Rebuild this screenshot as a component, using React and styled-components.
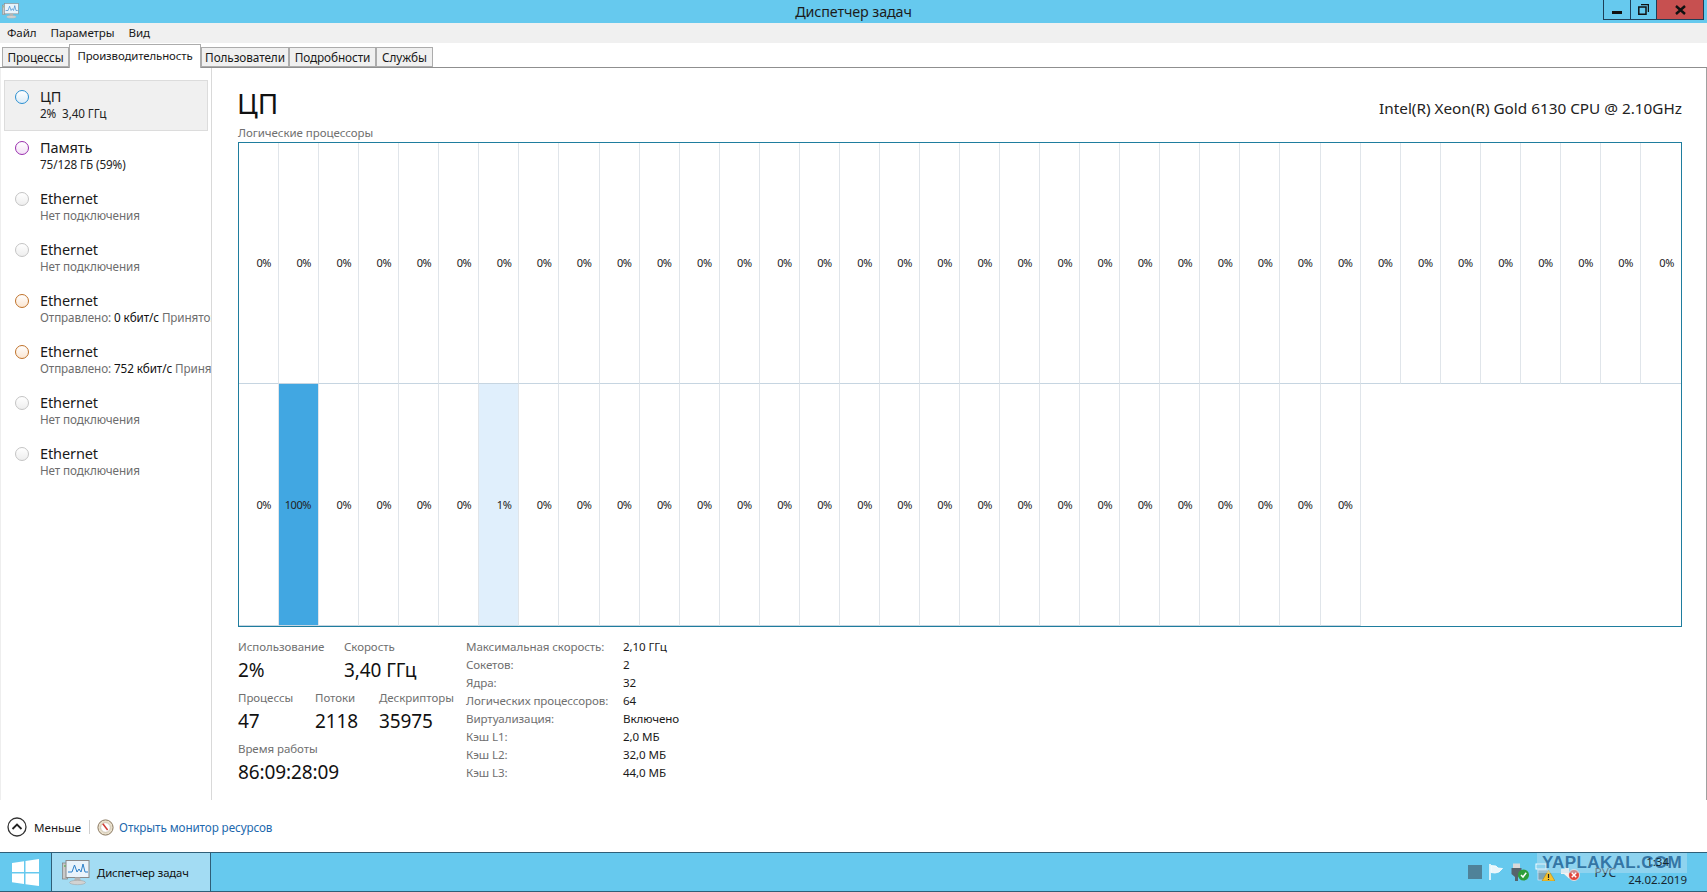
import React from "react";
import styled, { createGlobalStyle } from "styled-components";

const GlobalStyle = createGlobalStyle`
  html, body {
    margin: 0;
    padding: 0;
    height: 100%;
    overflow: hidden;
    background: #fff;
  }
  body {
    font-family: "Noto Sans", "Open Sans", sans-serif;
    color: #111;
  }
`;

const Window = styled.div`
  height: 892px;
  display: flex;
  flex-direction: column;
  position: relative;
`;

const TitleBar = styled.div`
  height: 23px;
  flex: none;
  background: #66c9ee;
  display: grid;
  grid-template-columns: 1fr auto 1fr;
  align-items: start;
`;

const TitleIcon = styled.div`
  padding: 2px 0 0 2px;
  height: 18px;
`;

const TitleText = styled.div`
  font-size: 14.3px;
  line-height: 23px;
  color: #1c1c1c;
  letter-spacing: -0.1px;
`;

const Controls = styled.div`
  justify-self: end;
  display: flex;
  padding-right: 3px;
  height: 20px;
`;

const ControlButton = styled.div`
  width: ${(p) => p.$w}px;
  height: 20px;
  box-sizing: border-box;
  display: flex;
  align-items: center;
  justify-content: center;
  border: 1px solid #1d3f58;
  border-top: none;
  border-left-width: ${(p) => (p.$first ? 1 : 0)}px;
  background: ${(p) => p.$bg || "transparent"};
`;

const MenuBar = styled.div`
  height: 20px;
  flex: none;
  box-sizing: border-box;
  padding: 0 0 2px 7px;
  background: #f0f0f0;
  display: flex;
  align-items: center;
  gap: 14px;
  font-size: 11.6px;
  letter-spacing: -0.1px;
  color: #1a1a1a;
`;

const TabStrip = styled.div`
  height: 25px;
  flex: none;
  box-sizing: border-box;
  display: flex;
  align-items: flex-end;
  padding-left: 2px;
  border-bottom: 1px solid #8f8f8f;
  background: #fff;
`;

const Tab = styled.div`
  width: ${(p) => p.$w}px;
  box-sizing: border-box;
  height: ${(p) => (p.$active ? 24 : 20)}px;
  margin-bottom: ${(p) => (p.$active ? -1 : 0)}px;
  padding-bottom: ${(p) => (p.$active ? 3 : 0)}px;
  display: flex;
  align-items: center;
  justify-content: center;
  background: ${(p) => (p.$active ? "#fff" : "#f0f0f0")};
  border: 1px solid #acacac;
  border-bottom: ${(p) => (p.$active ? "none" : "1px solid #acacac")};
  font-size: ${(p) => (p.$active ? 11.4 : 11.8)}px;
  letter-spacing: -0.1px;
  color: #1a1a1a;
`;

const Body = styled.div`
  flex: 1;
  display: flex;
  min-height: 0;
  border-right: 1px solid #a0a0a0;
`;

const Sidebar = styled.div`
  width: 212px;
  flex: none;
  box-sizing: border-box;
  border-right: 1px solid #d9d9d9;
  border-left: 1px solid #eeeeee;
  padding: 12px 0 0 3px;
  overflow: hidden;
`;

const SideItem = styled.div`
  width: 204px;
  height: 51px;
  box-sizing: border-box;
  display: flex;
  align-items: flex-start;
  padding: 6px 0 0 10px;
  gap: 11px;
  background: ${(p) => (p.$active ? "#f0f0f0" : "transparent")};
  border: 1px solid ${(p) => (p.$active ? "#dcdcdc" : "transparent")};
  white-space: nowrap;
`;

const Ring = styled.div`
  width: 14px;
  height: 14px;
  flex: none;
  margin-top: 3px;
  box-sizing: border-box;
  border-radius: 50%;
  border: 1.5px solid ${(p) => p.$color};
  background: linear-gradient(#ffffff, ${(p) => p.$tint});
`;

const SideTitle = styled.div`
  font-size: 14.5px;
  line-height: 18px;
  color: #1a1a1a;
  letter-spacing: -0.1px;
`;

const SideSub = styled.div`
  font-size: 11.7px;
  line-height: 16px;
  color: ${(p) => (p.$dark ? "#222" : "#6d6d6d")};
  letter-spacing: -0.1px;
  & b {
    font-weight: 400;
    color: #111;
  }
`;

const Main = styled.div`
  flex: 1;
  min-width: 0;
  padding: 16px 24px 0 26px;
`;

const Header = styled.div`
  display: flex;
  justify-content: space-between;
  align-items: flex-end;
  height: 40px;
`;

const Heading = styled.div`
  font-size: 28px;
  line-height: 39px;
  padding-bottom: 1px;
  margin-left: -1px;
  color: #111;
`;

const CpuName = styled.div`
  font-size: 15.3px;
  line-height: 20px;
  padding-bottom: 6px;
  color: #222;
`;

const ChartLabel = styled.div`
  font-size: 11.5px;
  line-height: 16px;
  padding-top: 1px;
  height: 15px;
  color: #707070;
  letter-spacing: -0.05px;
`;

const Chart = styled.div`
  margin-top: 2px;
  height: 485px;
  box-sizing: border-box;
  border: 1px solid #1f7d9e;
  display: grid;
  grid-template-columns: repeat(36, 1fr);
  grid-template-rows: 241px 1fr;
`;

const Cell = styled.div`
  box-sizing: border-box;
  display: flex;
  align-items: center;
  justify-content: flex-end;
  padding: 0 7px 1px 0;
  font-size: 11px;
  letter-spacing: -0.4px;
  color: #222;
  background: ${(p) => p.$fill || "transparent"};
  border-right: ${(p) => (p.$last ? "none" : "1px solid #e0e5ea")};
  border-bottom: 1px solid #c6d5e1;
`;

const Details = styled.div`
  display: flex;
  margin-top: 11px;
`;

const StatsColumn = styled.div`
  width: 228px;
  flex: none;
`;

const StatRow = styled.div`
  display: flex;
  height: 51px;
`;

const Stat = styled.div`
  width: ${(p) => p.$w}px;
  flex: none;
  white-space: nowrap;
`;

const StatLabel = styled.div`
  font-size: 11.5px;
  line-height: 18px;
  color: #707070;
  letter-spacing: -0.05px;
`;

const StatValue = styled.div`
  font-size: 19px;
  line-height: 29px;
  color: #111;
  letter-spacing: -0.1px;
`;

const InfoTable = styled.div`
  display: grid;
  grid-template-columns: 157px auto;
  grid-auto-rows: 18px;
  justify-content: start;
  align-items: center;
  align-self: flex-start;
  margin-top: -1px;
  font-size: 11.6px;
  letter-spacing: -0.1px;
`;

const InfoKey = styled.div`
  color: #707070;
  white-space: nowrap;
`;

const InfoValue = styled.div`
  color: #1a1a1a;
`;

const Footer = styled.div`
  height: 52px;
  flex: none;
  display: flex;
  align-items: center;
  padding: 2px 0 0 7px;
  box-sizing: border-box;
`;

const Less = styled.div`
  display: flex;
  align-items: center;
  gap: 7px;
  font-size: 11.6px;
  color: #1a1a1a;
`;

const FooterDivider = styled.div`
  width: 1px;
  height: 14px;
  background: #cfcfcf;
  margin: 0 7px 0 8px;
`;

const Link = styled.a`
  display: flex;
  align-items: center;
  gap: 5px;
  font-size: 11.7px;
  letter-spacing: -0.1px;
  color: #2268ad;
`;

const Taskbar = styled.div`
  height: 40px;
  flex: none;
  box-sizing: border-box;
  display: flex;
  align-items: stretch;
  background: #66c9ee;
  border-top: 1px solid #2f5f78;
  border-bottom: 1px solid #2f5f78;
  position: relative;
`;

const StartButton = styled.div`
  width: 52px;
  flex: none;
  box-sizing: border-box;
  border-right: 1px solid #2f5f78;
  display: flex;
  align-items: center;
  justify-content: center;
`;

const TaskItem = styled.div`
  width: 159px;
  flex: none;
  box-sizing: border-box;
  border-right: 1px solid #2f5f78;
  background: #a3dcf3;
  display: flex;
  align-items: center;
  padding-left: 10px;
  gap: 7px;
  font-size: 11.3px;
  letter-spacing: -0.1px;
  color: #111;
`;

const Tray = styled.div`
  margin-left: auto;
  display: flex;
  align-items: center;
  gap: 5px;
  padding-right: 20px;
`;

const TrayLang = styled.div`
  font-size: 12px;
  color: #1f3340;
  margin: 0 7px 0 10px;
`;

const Clock = styled.div`
  position: relative;
  z-index: 1;
  text-align: center;
  font-size: 11.5px;
  line-height: 18px;
  padding-bottom: 2px;
  color: #16262f;
`;

const Watermark = styled.div`
  position: absolute;
  left: 1537px;
  top: 0;
  width: 150px;
  height: 20px;
  background: rgba(190, 225, 240, 0.45);
  color: rgba(40, 105, 155, 0.9);
  font-family: "Liberation Sans", sans-serif;
  font-weight: 700;
  font-size: 17px;
  letter-spacing: 0.4px;
  line-height: 20px;
  text-align: center;
`;

const sideItems = [
  { title: "ЦП", sub: "2%\u00a0 3,40 ГГц", color: "#2b8fd0", tint: "#dcecf8", dark: true, active: true },
  { title: "Память", sub: "75/128 ГБ (59%)", color: "#9a2fae", tint: "#f3dff6", dark: true },
  { title: "Ethernet", sub: "Нет подключения", color: "#c4c4c4", tint: "#eeeeee" },
  { title: "Ethernet", sub: "Нет подключения", color: "#c4c4c4", tint: "#eeeeee" },
  { title: "Ethernet", sent: "0 кбит/с", rest: "Принято: 0 кбит/с", color: "#c0722a", tint: "#fbe6d2" },
  { title: "Ethernet", sent: "752 кбит/с", rest: "Принято: 0 кбит/с", color: "#c0722a", tint: "#fbe6d2" },
  { title: "Ethernet", sub: "Нет подключения", color: "#c4c4c4", tint: "#eeeeee" },
  { title: "Ethernet", sub: "Нет подключения", color: "#c4c4c4", tint: "#eeeeee" },
];

const tabs = [
  { label: "Процессы", w: 67 },
  { label: "Производительность", w: 132, active: true },
  { label: "Пользователи", w: 88 },
  { label: "Подробности", w: 87 },
  { label: "Службы", w: 57 },
];

const info = [
  ["Максимальная скорость:", "2,10 ГГц"],
  ["Сокетов:", "2"],
  ["Ядра:", "32"],
  ["Логических процессоров:", "64"],
  ["Виртуализация:", "Включено"],
  ["Кэш L1:", "2,0 МБ"],
  ["Кэш L2:", "32,0 МБ"],
  ["Кэш L3:", "44,0 МБ"],
];

// 64 logical processors, only two of them have any load
const cores = Array.from({ length: 64 }, (_, i) => {
  if (i === 37) return { text: "100%", fill: "#41a7e2" };
  if (i === 42) return { text: "1%", fill: "#e0effc" };
  return { text: "0%" };
});

function MonitorIcon({ size }) {
  return (
    <svg width={size} height={size} viewBox="0 0 28 28">
      <rect x="0.5" y="5" width="5" height="16" fill="#c9c9c9" stroke="#7d7d7d" strokeWidth="0.7" />
      <circle cx="3" cy="8" r="1" fill="#5cb85c" />
      <rect x="4" y="2.5" width="23" height="17" fill="#e9f3fb" stroke="#8a8a8a" />
      <path d="M6 14 L10 14 L12.5 7 L15 14 L17 11 L19 14 L21 6 L23 14 L26 14" fill="none" stroke="#2a7fc9" strokeWidth="1" />
      <path d="M13 19.5 L18 19.5 L19 23 L12 23 Z" fill="#b5b5b5" />
      <ellipse cx="15.5" cy="24.5" rx="8" ry="2.2" fill="#d2d2d2" stroke="#9a9a9a" strokeWidth="0.5" />
    </svg>
  );
}

function WindowsLogo() {
  return (
    <svg width="27" height="27" viewBox="0 0 27 27">
      <path d="M0 4 L12 2.2 V13 H0 Z M13.5 2 L27 0 V13 H13.5 Z M0 14.5 H12 V25 L0 23.2 Z M13.5 14.5 H27 V27 L13.5 25.2 Z" fill="#fff" />
    </svg>
  );
}

function LessIcon() {
  return (
    <svg width="20" height="20" viewBox="0 0 20 20">
      <circle cx="10" cy="10" r="9" fill="#fff" stroke="#333" strokeWidth="1.3" />
      <path d="M5.5 12 L10 7.5 L14.5 12" fill="none" stroke="#222" strokeWidth="1.8" />
    </svg>
  );
}

function ResourceIcon() {
  return (
    <svg width="17" height="17" viewBox="0 0 17 17">
      <circle cx="8.5" cy="8.5" r="7.6" fill="#e8dfcc" stroke="#8b7a62" strokeWidth="1" />
      <circle cx="8.5" cy="8.5" r="4.8" fill="#fff" stroke="#b9ad98" strokeWidth="0.6" />
      <path d="M5.8 4.8 L10.6 11" stroke="#cf3a32" strokeWidth="1.5" />
    </svg>
  );
}

function TrayIcons() {
  return (
    <>
      <svg width="14" height="14" viewBox="0 0 14 14">
        <rect width="14" height="14" fill="#4f8299" />
      </svg>
      <svg width="18" height="18" viewBox="0 0 18 18">
        <path d="M3 1 V17" stroke="#fff" strokeWidth="1.5" />
        <path d="M4 2.5 L9 3 L11 5 L15.5 5.5 L12 9 L8 10 L4 9.5 Z" fill="#eaf6fb" stroke="#fff" strokeWidth="0.8" />
      </svg>
      <svg width="20" height="18" viewBox="0 0 20 18">
        <rect x="3" y="0.5" width="7" height="5" fill="#d9d9d9" />
        <path d="M1.5 5 H11.5 V11 L8 14 V18 H5 V14 L1.5 11 Z" fill="#56636b" />
        <circle cx="13.5" cy="12" r="5.5" fill="#2f9e3a" />
        <path d="M11 12 L13 14 L16.2 9.8" fill="none" stroke="#fff" strokeWidth="1.5" />
      </svg>
      <svg width="20" height="18" viewBox="0 0 20 18">
        <rect x="1" y="1" width="10" height="5" fill="none" stroke="#fff" />
        <rect x="3" y="7" width="10" height="10" fill="#7da3b4" stroke="#eef" strokeWidth="0.6" />
        <path d="M13.5 7 L20 18 H7 Z" fill="#f5c22e" stroke="#a87d10" strokeWidth="0.5" />
        <path d="M13.5 11 V15 M13.5 16 V17" stroke="#222" strokeWidth="1.2" />
      </svg>
      <svg width="20" height="18" viewBox="0 0 20 18">
        <path d="M1 6 H4 L9 1.5 V15.5 L4 11 H1 Z" fill="#f2f2f2" />
        <circle cx="14" cy="12" r="5.5" fill="#e0483e" stroke="#fff" strokeWidth="0.7" />
        <path d="M11.8 9.8 L16.2 14.2 M16.2 9.8 L11.8 14.2" stroke="#fff" strokeWidth="1.5" />
      </svg>
    </>
  );
}

function App() {
  return (
    <Window>
      <GlobalStyle />
      <TitleBar>
        <TitleIcon>
          <MonitorIcon size={17} />
        </TitleIcon>
        <TitleText>Диспетчер задач</TitleText>
        <Controls>
          <ControlButton $w={28} $first>
            <svg width="10" height="10" viewBox="0 0 10 10">
              <rect y="6" width="10" height="3" fill="#111" />
            </svg>
          </ControlButton>
          <ControlButton $w={26}>
            <svg width="11" height="11" viewBox="0 0 11 11">
              <path d="M3 0.5 H10.5 V8 M0.8 3 H8 V10.2 H0.8 Z" fill="none" stroke="#111" strokeWidth="1.5" />
            </svg>
          </ControlButton>
          <ControlButton $w={47} $bg="#c75050">
            <svg width="11" height="10" viewBox="0 0 11 10">
              <path d="M1 1 L10 9 M10 1 L1 9" stroke="#111" strokeWidth="2.4" />
            </svg>
          </ControlButton>
        </Controls>
      </TitleBar>

      <MenuBar>
        <span>Файл</span>
        <span>Параметры</span>
        <span>Вид</span>
      </MenuBar>

      <TabStrip>
        {tabs.map((tab) => (
          <Tab key={tab.label} $w={tab.w} $active={tab.active}>
            {tab.label}
          </Tab>
        ))}
      </TabStrip>

      <Body>
        <Sidebar>
          {sideItems.map((item, i) => (
            <SideItem key={i} $active={item.active}>
              <Ring $color={item.color} $tint={item.tint} />
              <div>
                <SideTitle>{item.title}</SideTitle>
                {item.sent ? (
                  <SideSub>
                    Отправлено: <b>{item.sent}</b> {item.rest}
                  </SideSub>
                ) : (
                  <SideSub $dark={item.dark}>{item.sub}</SideSub>
                )}
              </div>
            </SideItem>
          ))}
        </Sidebar>

        <Main>
          <Header>
            <Heading>ЦП</Heading>
            <CpuName>Intel(R) Xeon(R) Gold 6130 CPU @ 2.10GHz</CpuName>
          </Header>
          <ChartLabel>Логические процессоры</ChartLabel>
          <Chart>
            {cores.map((core, i) => (
              <Cell key={i} $fill={core.fill} $last={i === 35}>
                {core.text}
              </Cell>
            ))}
          </Chart>

          <Details>
            <StatsColumn>
              <StatRow>
                <Stat $w={106}>
                  <StatLabel>Использование</StatLabel>
                  <StatValue>2%</StatValue>
                </Stat>
                <Stat $w={110}>
                  <StatLabel>Скорость</StatLabel>
                  <StatValue>3,40 ГГц</StatValue>
                </Stat>
              </StatRow>
              <StatRow>
                <Stat $w={77}>
                  <StatLabel>Процессы</StatLabel>
                  <StatValue>47</StatValue>
                </Stat>
                <Stat $w={64}>
                  <StatLabel>Потоки</StatLabel>
                  <StatValue>2118</StatValue>
                </Stat>
                <Stat $w={80}>
                  <StatLabel>Дескрипторы</StatLabel>
                  <StatValue>35975</StatValue>
                </Stat>
              </StatRow>
              <StatRow>
                <Stat $w={160}>
                  <StatLabel>Время работы</StatLabel>
                  <StatValue>86:09:28:09</StatValue>
                </Stat>
              </StatRow>
            </StatsColumn>
            <InfoTable>
              {info.map(([key, value]) => (
                <React.Fragment key={key}>
                  <InfoKey>{key}</InfoKey>
                  <InfoValue>{value}</InfoValue>
                </React.Fragment>
              ))}
            </InfoTable>
          </Details>
        </Main>
      </Body>

      <Footer>
        <Less>
          <LessIcon />
          <span>Меньше</span>
        </Less>
        <FooterDivider />
        <Link>
          <ResourceIcon />
          Открыть монитор ресурсов
        </Link>
      </Footer>

      <Taskbar>
        <StartButton>
          <WindowsLogo />
        </StartButton>
        <TaskItem>
          <MonitorIcon size={28} />
          Диспетчер задач
        </TaskItem>
        <Tray>
          <TrayIcons />
          <TrayLang>РУС</TrayLang>
          <Clock>
            1:34
            <br />
            24.02.2019
          </Clock>
        </Tray>
        <Watermark>YAPLAKAL.COM</Watermark>
      </Taskbar>
    </Window>
  );
}

export default App;
